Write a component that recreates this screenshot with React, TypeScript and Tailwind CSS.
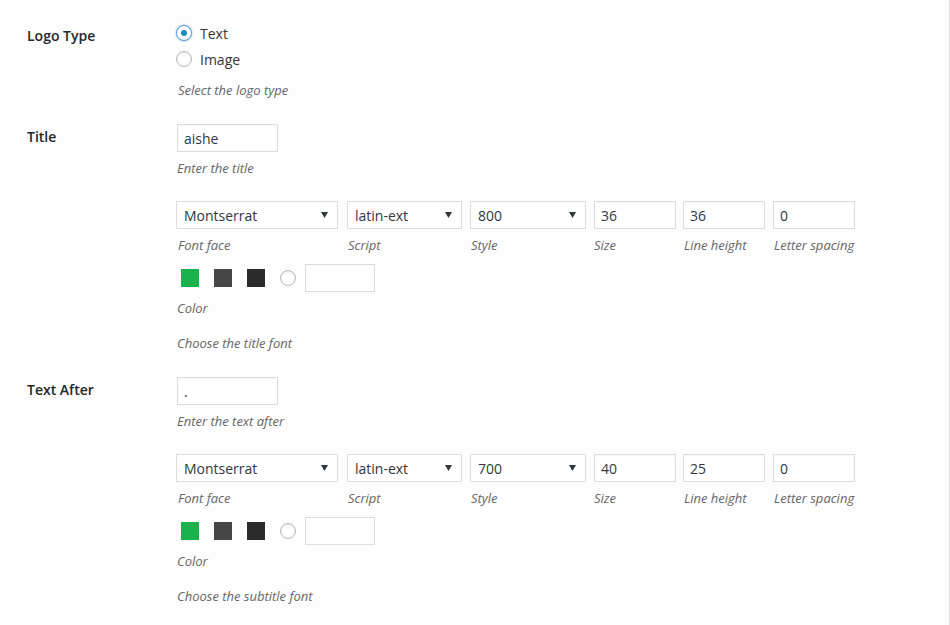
import React from "react";

const font = { fontFamily: '"Open Sans", "Noto Sans", sans-serif' };

function Arrow() {
  return (
    <svg width="7" height="6" viewBox="0 0 7 6" className="shrink-0">
      <path d="M0 0 L7 0 L3.5 6 Z" fill="#32373c" />
    </svg>
  );
}

function Select({ value, w }: { value: string; w: string }) {
  return (
    <div className={`${w} h-[28px] border border-[#dddddd] bg-white flex items-center justify-between pl-[7px] pr-[9px] text-[14px] text-[#32373c]`}>
      <span>{value}</span>
      <Arrow />
    </div>
  );
}

function Input({ value, w }: { value: string; w: string }) {
  return (
    <div className={`${w} h-[28px] border border-[#dddddd] bg-white flex items-center pl-[6px] text-[14px] text-[#32373c] shadow-[inset_0_1px_2px_rgba(0,0,0,0.04)]`}>
      {value}
    </div>
  );
}

function Desc({ children, className = "" }: { children: React.ReactNode; className?: string }) {
  return (
    <div className={`h-[20px] leading-[20px] text-[13px] italic text-[#666666] ${className}`}>{children}</div>
  );
}

function FontBlock({ title, value, style, size, lh, desc }: { title: string; value: string; style: string; size: string; lh: string; desc: string }) {
  return (
    <div>
      <Input value={value} w="w-[101px]" />
      <Desc className="mt-[6px]">{title}</Desc>
      <div className="mt-[23px] flex -ml-[1px]">
        <div className="w-[171px] shrink-0">
          <Select value="Montserrat" w="w-[162px]" />
          <Desc className="mt-[6px] pl-[2px]">Font face</Desc>
        </div>
        <div className="w-[123px] shrink-0">
          <Select value="latin-ext" w="w-[115px]" />
          <Desc className="mt-[6px] pl-[1px]">Script</Desc>
        </div>
        <div className="w-[124px] shrink-0">
          <Select value={style} w="w-[116px]" />
          <Desc className="mt-[6px] pl-[1px]">Style</Desc>
        </div>
        <div className="w-[89px] shrink-0">
          <Input value={size} w="w-[82px]" />
          <Desc className="mt-[6px]">Size</Desc>
        </div>
        <div className="w-[90px] shrink-0">
          <Input value={lh} w="w-[82px]" />
          <Desc className="mt-[6px] pl-[1px]">Line height</Desc>
        </div>
        <div className="w-[90px] shrink-0">
          <Input value="0" w="w-[82px]" />
          <Desc className="mt-[6px] pl-[1px]">Letter spacing</Desc>
        </div>
      </div>
      <div className="mt-[9px] flex items-center h-[28px]">
        <div className="ml-[4px] w-[18px] h-[18px] bg-[#1bb14c]" />
        <div className="ml-[15px] w-[18px] h-[18px] bg-[#474747]" />
        <div className="ml-[15px] w-[18px] h-[18px] bg-[#2b2b2b]" />
        <div className="ml-[15px] w-[16px] h-[16px] rounded-full border border-[#b4b9be] bg-white shadow-[inset_0_1px_2px_rgba(0,0,0,0.1)]" />
        <div className="ml-[9px] w-[70px] h-[28px] border border-[#dddddd] bg-white" />
      </div>
      <Desc className="mt-[6px]">Color</Desc>
      <Desc className="mt-[15px]">{desc}</Desc>
    </div>
  );
}

function Label({ children, top }: { children: React.ReactNode; top: string }) {
  return (
    <div className={`w-[177px] shrink-0 pl-[27px] ${top} h-[20px] leading-[20px] text-[14px] font-semibold text-[#23282d]`}>
      {children}
    </div>
  );
}

export default function App() {
  return (
    <div style={font} className="w-[950px] h-[625px] overflow-hidden bg-[#fdfdfd] border-r border-[#d9d9d9]">
      <div className="flex">
        <Label top="pt-[26px]">Logo Type</Label>
        <div className="pt-[23px] -ml-[1px]">
          <div className="flex items-center h-[20px]">
            <div className="w-[16px] h-[16px] rounded-full border border-[#5b9dd9] bg-white flex items-center justify-center shadow-[0_0_2px_rgba(30,140,190,0.6)]">
              <div className="w-[6px] h-[6px] rounded-full bg-[#1e8cbe]" />
            </div>
            <span className="ml-[8px] text-[14px] text-[#32373c]">Text</span>
          </div>
          <div className="mt-[6px] flex items-center h-[20px]">
            <div className="w-[16px] h-[16px] rounded-full border border-[#b4b9be] bg-white shadow-[inset_0_1px_2px_rgba(0,0,0,0.1)]" />
            <span className="ml-[8px] text-[14px] text-[#32373c]">Image</span>
          </div>
          <Desc className="mt-[11px] pl-[2px]">Select the logo type</Desc>
        </div>
      </div>
      <div className="flex mt-[24px]">
        <Label top="pt-[3px]">Title</Label>
        <div>
          <FontBlock title="Enter the title" value="aishe" style="800" size="36" lh="36" desc="Choose the title font" />
        </div>
      </div>
      <div className="flex mt-[24px]">
        <Label top="pt-[3px]">Text After</Label>
        <div>
          <FontBlock title="Enter the text after" value="." style="700" size="40" lh="25" desc="Choose the subtitle font" />
        </div>
      </div>
    </div>
  );
}
